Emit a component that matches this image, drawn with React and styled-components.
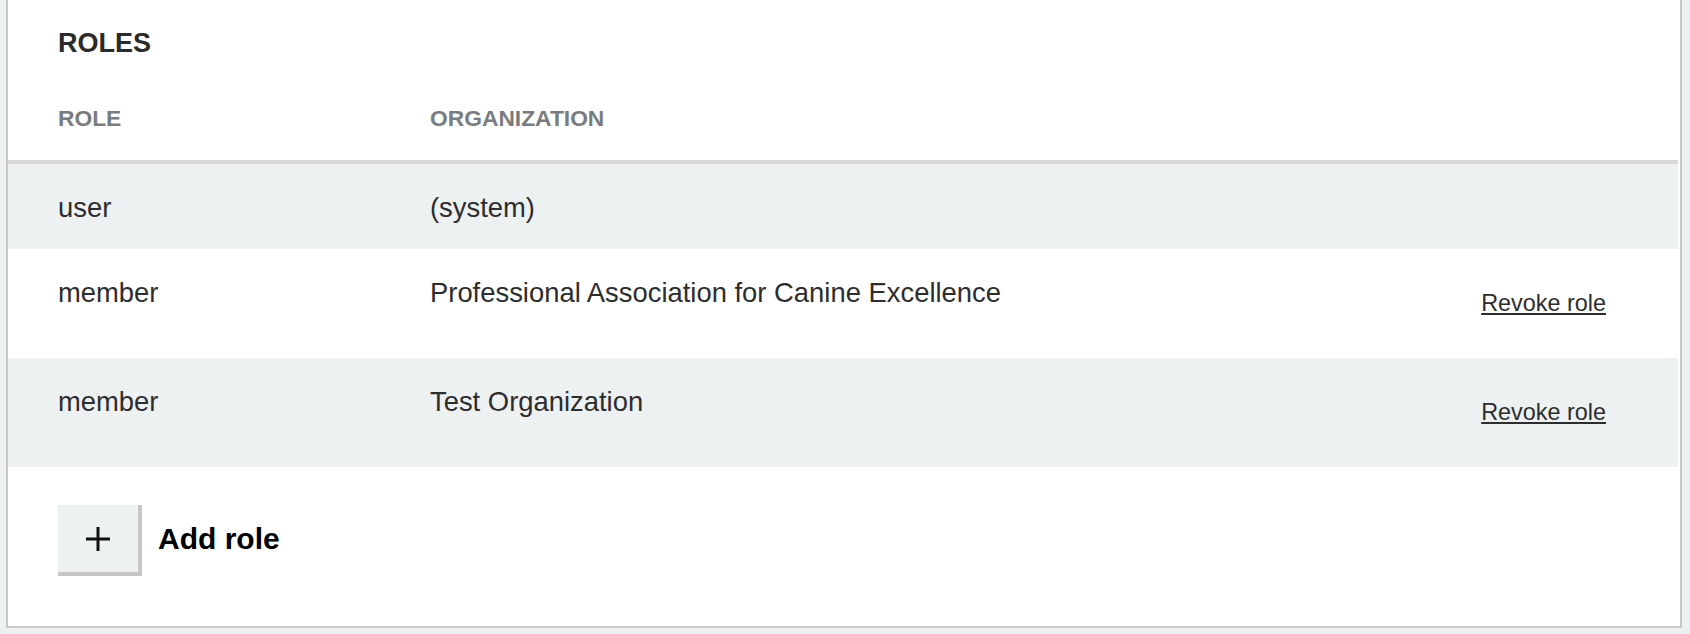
import React from 'react'
import styled, {createGlobalStyle} from 'styled-components'

const GlobalStyle = createGlobalStyle`
  body {
    margin: 0;
    background: #edf1f2;
    font-family: 'Liberation Sans', Arial, sans-serif;
    color: #2d2d2d;
  }
`

const Card = styled.section`
  margin: 0 8px 6px 6px;
  background: #fff;
  border: 2px solid #c7c7c7;
  border-top: none;
  padding: 27px 0 50px;
`

const Title = styled.h2`
  margin: 0 0 0 50px;
  font-size: 27px;
  line-height: 32px;
  font-weight: 700;
  color: #2a2a2a;
`

const Table = styled.div`
  margin-right: 2px;
`

const Row = styled.div`
  display: grid;
  grid-template-columns: 372px 1fr auto;
  align-items: start;
  padding: 0 72px 0 50px;
  background: ${props => (props.shaded ? '#edf1f2' : '#fff')};
`

const HeadRow = styled(Row)`
  padding-top: 43px;
  padding-bottom: 25px;
  border-bottom: 4px solid #d8d8d8;
`

const HeadCell = styled.div`
  font-size: 22.8px;
  line-height: 33px;
  font-weight: 700;
  color: #787c7e;
`

const Cell = styled.div`
  padding: 23px 0 21px;
  font-size: 27.4px;
  line-height: 41px;
`

const ActionCell = styled.div`
  padding: 38px 0;
  font-size: 23.4px;
  line-height: 33px;
`

const Revoke = styled.a`
  color: #2d2d2d;
  text-decoration: underline;
  text-decoration-thickness: 2px;
  text-underline-offset: 2px;
  cursor: pointer;
`

const AddRow = styled.div`
  display: flex;
  align-items: center;
  gap: 16px;
  margin: 38px 0 0 50px;
`

const AddButton = styled.button`
  width: 84px;
  height: 71px;
  padding: 0;
  display: flex;
  align-items: center;
  justify-content: center;
  background: #edf1f2;
  border: none;
  border-right: 4px solid #c6c6c6;
  border-bottom: 4px solid #c6c6c6;
  cursor: pointer;
`

const AddLabel = styled.span`
  font-size: 30px;
  font-weight: 700;
  color: #000;
  margin-bottom: 3px;
`

const roles = [
  {role: 'user', org: '(system)', revokable: false},
  {role: 'member', org: 'Professional Association for Canine Excellence', revokable: true},
  {role: 'member', org: 'Test Organization', revokable: true}
]

export default function App() {
  return (
    <>
      <GlobalStyle/>
      <Card>
        <Title>ROLES</Title>
        <Table>
          <HeadRow>
            <HeadCell>ROLE</HeadCell>
            <HeadCell>ORGANIZATION</HeadCell>
            <HeadCell/>
          </HeadRow>
          {roles.map((r, i) => (
            <Row key={i} shaded={i % 2 === 0}>
              <Cell>{r.role}</Cell>
              <Cell>{r.org}</Cell>
              {r.revokable ? (
                <ActionCell><Revoke>Revoke role</Revoke></ActionCell>
              ) : <div/>}
            </Row>
          ))}
        </Table>
        <AddRow>
          <AddButton aria-label="Add role">
            <svg width="26" height="26" viewBox="0 0 26 26">
              <path d="M13 1v24M1 13h24" stroke="#111" strokeWidth="3" fill="none"/>
            </svg>
          </AddButton>
          <AddLabel>Add role</AddLabel>
        </AddRow>
      </Card>
    </>
  )
}
